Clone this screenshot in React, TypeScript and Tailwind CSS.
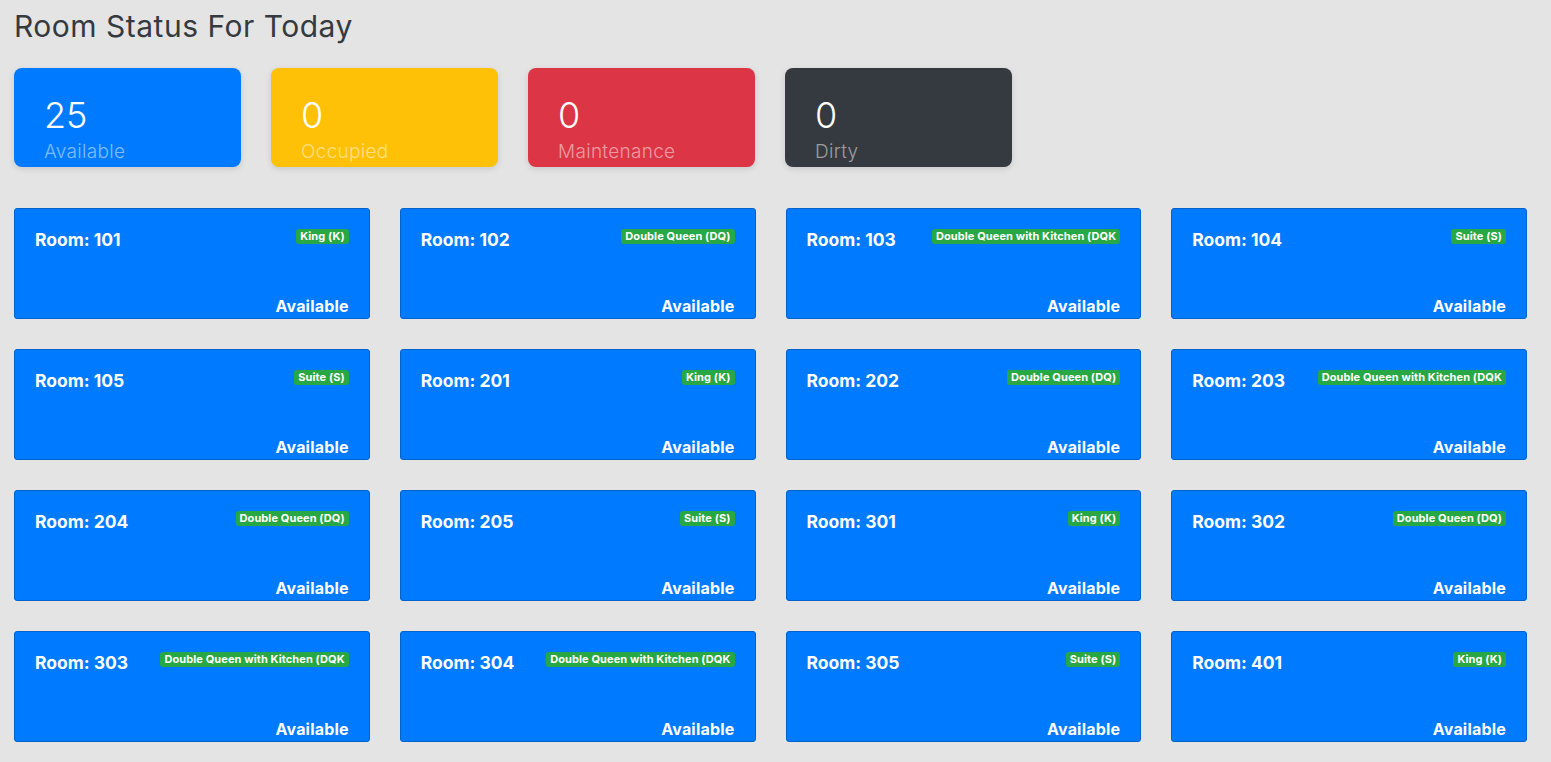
import React from 'react';

const stats = [
  { count: 25, label: 'Available', bg: 'bg-[#007bff]' },
  { count: 0, label: 'Occupied', bg: 'bg-[#ffc107]' },
  { count: 0, label: 'Maintenance', bg: 'bg-[#dc3545]' },
  { count: 0, label: 'Dirty', bg: 'bg-[#343a40]' },
];

const rooms = [
  { no: '101', type: 'King (K)' },
  { no: '102', type: 'Double Queen (DQ)' },
  { no: '103', type: 'Double Queen with Kitchen (DQK' },
  { no: '104', type: 'Suite (S)' },
  { no: '105', type: 'Suite (S)' },
  { no: '201', type: 'King (K)' },
  { no: '202', type: 'Double Queen (DQ)' },
  { no: '203', type: 'Double Queen with Kitchen (DQK' },
  { no: '204', type: 'Double Queen (DQ)' },
  { no: '205', type: 'Suite (S)' },
  { no: '301', type: 'King (K)' },
  { no: '302', type: 'Double Queen (DQ)' },
  { no: '303', type: 'Double Queen with Kitchen (DQK' },
  { no: '304', type: 'Double Queen with Kitchen (DQK' },
  { no: '305', type: 'Suite (S)' },
  { no: '401', type: 'King (K)' },
];

export default function App() {
  return (
    <div className="min-h-screen bg-[#e4e4e4] pl-[14px] pr-[24px] pt-[6px] pb-6 font-['Inter',sans-serif]">
      <h1 className="text-[30px] font-normal text-[#343a40] leading-[40px] tracking-[0.5px]">
        Room Status For Today
      </h1>

      {/* Summary */}
      <div className="mt-[22px] flex gap-[30px]">
        {stats.map((s) => (
          <div
            key={s.label}
            className={`${s.bg} w-[227px] h-[99px] rounded-lg shadow-[0_2px_6px_rgba(0,0,0,0.12)] pl-[30px] pt-[25px]`}
          >
            <div className="text-[36px] font-light text-white leading-[44px]">{s.count}</div>
            <div className="text-[19px] font-light text-white/50 leading-[22px] mt-[4px] tracking-[0.3px]">{s.label}</div>
          </div>
        ))}
      </div>

      {/* Rooms */}
      <div className="mt-[41px] grid grid-cols-4 gap-[30px]">
        {rooms.map((r) => (
          <div
            key={r.no}
            className="h-[111px] bg-[#007bff] border border-[#0062cc] rounded-[3px] px-5 pt-[20px] pb-[2px] flex flex-col justify-between"
          >
            <div className="flex items-start justify-between">
              <div className="text-[17.5px] font-bold text-white leading-[22px]">
                Room: {r.no}
              </div>
              <span className="bg-[#28a745] text-white text-[11px] font-bold leading-[15px] px-[4px] rounded-[3px] whitespace-nowrap tracking-[0.1px]">
                {r.type}
              </span>
            </div>
            <div className="text-right text-[16px] font-bold text-white leading-[20px] tracking-[0.2px]">Available</div>
          </div>
        ))}
      </div>
    </div>
  );
}
